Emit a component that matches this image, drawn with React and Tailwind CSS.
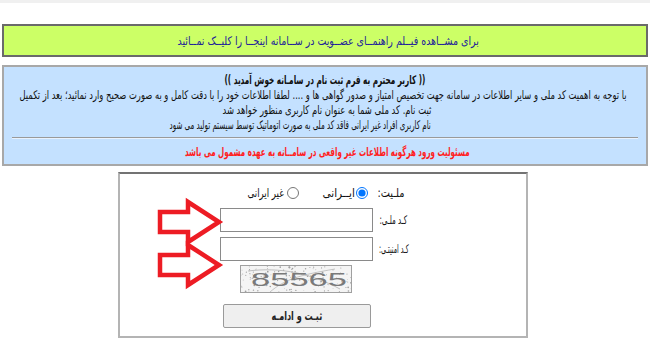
import React, { useLayoutEffect, useRef, useState } from "react";

function Fit({ className = "", textClass = "", children }) {
  const outer = useRef(null);
  const inner = useRef(null);
  const [s, setS] = useState(1);
  useLayoutEffect(() => {
    const W = outer.current.clientWidth;
    const n = inner.current.offsetWidth;
    if (n && W) setS(W / n);
  }, []);
  return (
    <div ref={outer} className={"flex justify-center " + className}>
      <span
        ref={inner}
        dir="rtl"
        className={"shrink-0 whitespace-nowrap " + textClass}
        style={{ transform: `scaleX(${s})` }}
      >
        {children}
      </span>
    </div>
  );
}

function Arrow({ cy }) {
  const pts = [
    [160, cy - 10],
    [188, cy - 10],
    [188, cy - 20],
    [219, cy],
    [188, cy + 20],
    [188, cy + 10],
    [160, cy + 10],
  ]
    .map((p) => p.join(","))
    .join(" ");
  return (
    <polygon
      points={pts}
      fill="none"
      stroke="#ed1c24"
      strokeWidth="4.5"
      strokeLinejoin="miter"
    />
  );
}

function Captcha() {
  const dots = [];
  let s = 7;
  const rnd = () => {
    s = (s * 9301 + 49297) % 233280;
    return s / 233280;
  };
  for (let i = 0; i < 160; i++) {
    dots.push({ x: rnd() * 112, y: rnd() * 28, r: rnd() * 0.6 + 0.3 });
  }
  return (
    <svg width="112" height="28" viewBox="0 0 112 28" className="block">
      <rect x="0" y="0" width="112" height="28" fill="#f4f4f4" />
      {dots.map((d, i) => (
        <circle key={i} cx={d.x} cy={d.y} r={d.r} fill="#a0a0a0" />
      ))}
      <path d="M8 6 C 40 2, 70 8, 100 24" stroke="#b0b0b0" fill="none" strokeWidth="0.8" />
      <path d="M30 27 C 45 14, 60 10, 95 4" stroke="#b8b8b8" fill="none" strokeWidth="0.8" />
      <text
        x="11"
        y="21"
        fontFamily="Liberation Sans, sans-serif"
        fontSize="19"
        textLength="96"
        lengthAdjust="spacingAndGlyphs"
        fill="#7a7a7a"
      >
        85565
      </text>
      <rect x="0.5" y="0.5" width="111" height="27" fill="none" stroke="#a0a0a0" />
    </svg>
  );
}

export default function App() {
  return (
    <div className="relative w-[650px] h-[362px] overflow-hidden bg-white font-['DejaVu_Sans_Condensed','DejaVu_Sans',sans-serif] text-[12px] text-[#111]">
      <div className="h-[3px] bg-[#f0f0f0]" />

      <div className="mx-[2px] mt-[21px] h-[33px] flex items-center justify-center bg-[#ccff66] border-2 border-[#6a6a6a]">
        <Fit className="w-[301px] ml-[6px]" textClass="text-[#22229a]">
          برای مشــاهده فیــلم راهنمــای عضــویت در ســامانه اینجــا را کلیــک نمــائید
        </Fit>
      </div>

      <div className="mx-[2px] mt-[8px] h-[101px] bg-[#c4e1ff] border-2 border-[#a8a8a8] pt-[6px] flex flex-col items-center leading-[15px]">
        <Fit className="w-[201px]" textClass="font-bold">
          (( کاربر محترم به فرم ثبت نام در سامـانه خوش آمدید ))
        </Fit>
        <Fit className="w-[607px] mr-[3px]">
          با توجه به اهمیت کد ملی و سایر اطلاعات در سامانه جهت تخصیص امتیاز و صدور گواهی ها و .... لطفا اطلاعات خود را با دقت کامل و به صورت صحیح وارد نمائید؛ بعد از تکمیل
        </Fit>
        <Fit className="w-[209px] ml-[3px]">
          ثبت نام. کد ملی شما به عنوان نام کاربری منظور خواهد شد
        </Fit>
        <Fit className="w-[261px] mr-[49px]">
          نام کاربری افراد غیر ایرانی فاقد کد ملی به صورت اتوماتیک توسط سیستم تولید می شود
        </Fit>
        <div className="self-stretch mx-[8px] mt-[4px] border-t border-[#9a9a9a] border-b border-b-[#e8f2ff]" />
        <Fit className="w-[285px] mt-[6px] ml-[5px]" textClass="font-bold text-[#ff1f1f]">
          مسئولیت ورود هرگونه اطلاعات غیر واقعی در سامــانه به عهده مشمول می باشد
        </Fit>
      </div>

      <div className="ml-[118px] mt-[6px] w-[410px] h-[166px] border-2 border-[#b4b4b4] border-t-[#737373] bg-white">
        <div className="ml-[100px] mt-[11px] flex flex-col">
          <div className="flex items-center h-[16px]">
            <Fit className="ml-[28px] w-[36px]">غیر ایرانی</Fit>
            <input type="radio" name="n" readOnly className="ml-[3px] w-[12px] h-[12px] shrink-0" />
            <Fit className="ml-[24px] w-[32px]">ایــرانی</Fit>
            <input type="radio" name="n" checked readOnly className="ml-[1px] w-[12px] h-[12px] shrink-0" />
            <Fit className="ml-[10px] w-[27px]">ملـیت:</Fit>
          </div>

          <div className="flex items-center mt-[7px]">
            <input type="text" className="w-[153px] h-[24px] border border-[#8a8a8a] bg-white outline-none" />
            <Fit className="ml-[6px] w-[28px]">کـد ملـی:</Fit>
          </div>

          <div className="flex items-center mt-[5px]">
            <input type="text" className="w-[153px] h-[24px] border border-[#8a8a8a] bg-white outline-none" />
            <Fit className="ml-[6px] w-[30px]">کـد امنیتـی:</Fit>
          </div>

          <div className="ml-[20px] mt-[4px]">
            <Captcha />
          </div>

          <div className="ml-[3px] mt-[11px]">
            <button
              type="button"
              className="w-[148px] h-[24px] bg-[#efefef] border border-[#9a9a9a] rounded-[2px] text-[12px] text-[#222] flex items-center justify-center"
            >
              <Fit className="w-[51px]" textClass="font-bold">ثبـت و ادامـه</Fit>
            </button>
          </div>
        </div>
      </div>

      <svg className="absolute left-0 top-0 pointer-events-none" width="650" height="362">
        <Arrow cy={222} />
        <Arrow cy={265} />
      </svg>
    </div>
  );
}
